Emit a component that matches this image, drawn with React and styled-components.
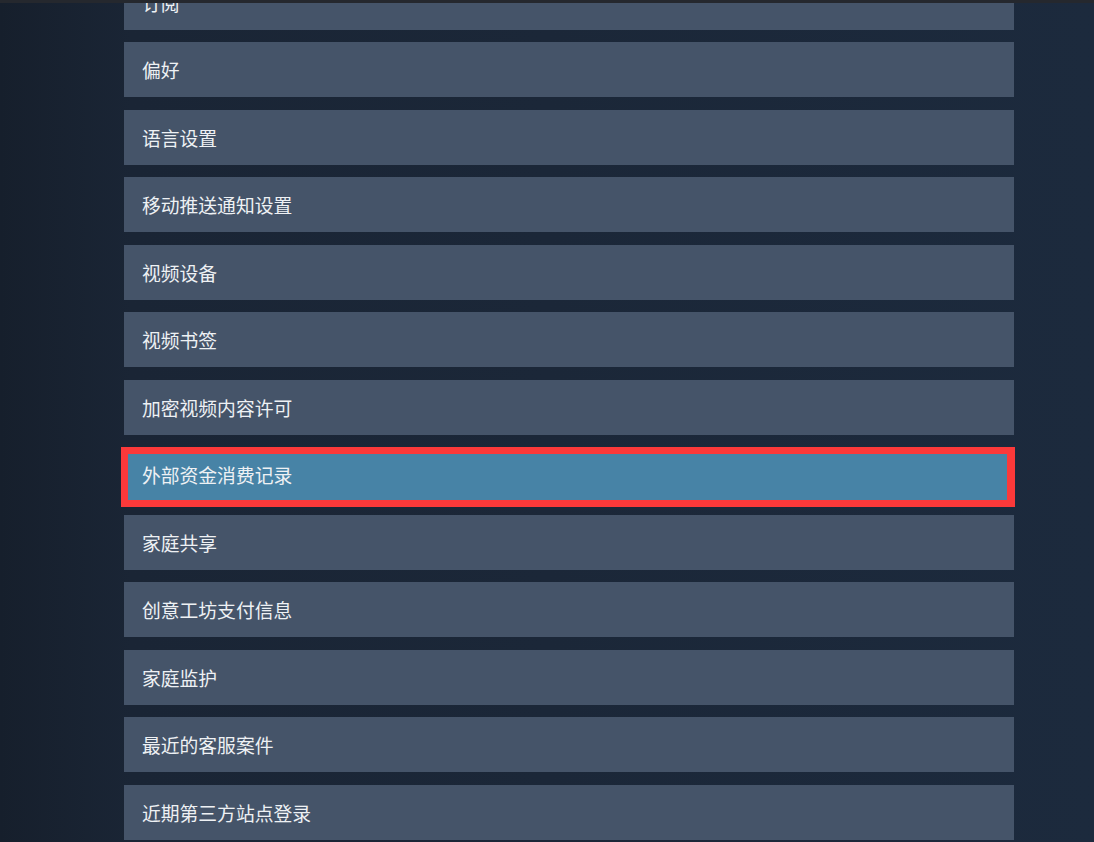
import React from "react";
import styled, { createGlobalStyle } from "styled-components";

const Global = createGlobalStyle`
  html, body { margin: 0; padding: 0; }
  body {
    background: #1b2636;
    font-family: "Noto Sans CJK SC", "Noto Sans", Arial, sans-serif;
    overflow: hidden;
  }
`;

const Page = styled.div`
  width: 1094px;
  height: 842px;
  overflow: hidden;
  background: linear-gradient(90deg, #161f2c 0%, #1a2535 12%, #1b2738 50%, #1c2a3d 100%);
  position: relative;
`;

const TopShade = styled.div`
  position: absolute;
  top: 0;
  left: 0;
  right: 0;
  height: 3px;
  background: #25282e;
  z-index: 5;
`;

const List = styled.div`
  width: 890px;
  margin: -25.5px 0 0 124px;
  display: flex;
  flex-direction: column;
  gap: 12.5px;
`;

const Item = styled.div`
  position: relative;
  height: 55px;
  display: flex;
  align-items: center;
  padding-left: 18px;
  box-sizing: border-box;
  background: ${(p) => (p.$active ? "#4783a6" : "#455469")};
  color: #eef1f4;
  font-size: 18.8px;
  letter-spacing: 0;
`;

const Marker = styled.div`
  position: absolute;
  top: 0;
  left: -3px;
  right: -1px;
  bottom: -5px;
  border: 7px solid #fb393a;
  border-right-width: 8px;
  pointer-events: none;
`;

const items = [
  "订阅",
  "偏好",
  "语言设置",
  "移动推送通知设置",
  "视频设备",
  "视频书签",
  "加密视频内容许可",
  "外部资金消费记录",
  "家庭共享",
  "创意工坊支付信息",
  "家庭监护",
  "最近的客服案件",
  "近期第三方站点登录",
];

export default function App() {
  return (
    <Page>
      <Global />
      <TopShade />
      <List>
        {items.map((t) => {
          const active = t === "外部资金消费记录";
          return (
            <Item key={t} $active={active}>
              {t}
              {active && <Marker />}
            </Item>
          );
        })}
      </List>
    </Page>
  );
}
